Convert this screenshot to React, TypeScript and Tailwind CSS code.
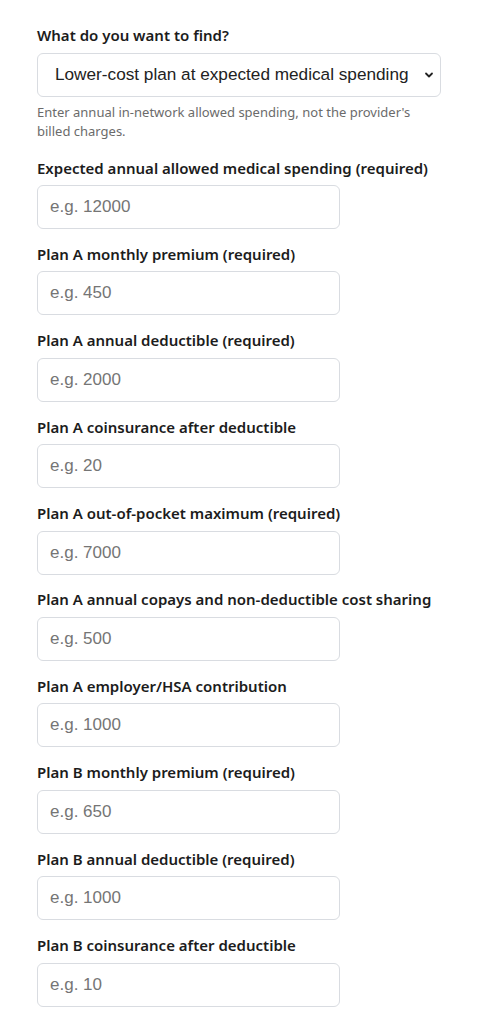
import { useState } from 'react'

const fields = [
  { label: 'Expected annual allowed medical spending (required)', ph: 'e.g. 12000' },
  { label: 'Plan A monthly premium (required)', ph: 'e.g. 450' },
  { label: 'Plan A annual deductible (required)', ph: 'e.g. 2000' },
  { label: 'Plan A coinsurance after deductible', ph: 'e.g. 20' },
  { label: 'Plan A out-of-pocket maximum (required)', ph: 'e.g. 7000' },
  { label: 'Plan A annual copays and non-deductible cost sharing', ph: 'e.g. 500' },
  { label: 'Plan A employer/HSA contribution', ph: 'e.g. 1000' },
  { label: 'Plan B monthly premium (required)', ph: 'e.g. 650' },
  { label: 'Plan B annual deductible (required)', ph: 'e.g. 1000' },
  { label: 'Plan B coinsurance after deductible', ph: 'e.g. 10' },
]

const labelCls = "block text-[15px] leading-[22.5px] font-semibold text-[#1c1c1c] font-['Noto_Sans',sans-serif] mb-1.5"
const inputCls = "block w-[303px] h-[44px] px-3 rounded-md border border-[#d9dce1] bg-white text-[17px] text-[#222] font-['Liberation_Sans',Arial,sans-serif] placeholder:text-[#757575] outline-none"

export default function App() {
  const [mode, setMode] = useState('lower')
  return (
    <div className="min-h-screen bg-white pl-[37px] pr-4 pt-6 pb-6">
      <div className="mb-4">
        <label className={labelCls}>What do you want to find?</label>
        <div className="relative w-[404px]">
          <select value={mode} onChange={e => setMode(e.target.value)}
            className="block w-full h-[44px] pl-[17px] pr-8 rounded-md border border-[#d9dce1] bg-white text-[17.2px] text-[#222] font-['Liberation_Sans',Arial,sans-serif] appearance-none outline-none">
            <option value="lower">Lower-cost plan at expected medical spending</option>
            <option value="breakeven">Break-even medical spending</option>
          </select>
          <svg className="absolute right-[7px] top-1/2 -translate-y-1/2 w-[10px] h-[10px] pointer-events-none text-[#222]" viewBox="0 0 10 10" fill="none" stroke="currentColor" strokeWidth={1.8} strokeLinecap="round" strokeLinejoin="round">
            <path d="M2 3.5l3 3 3-3" />
          </svg>
        </div>
        <p className="mt-1.5 text-[13px] leading-[19px] text-[#6b6b6b] font-['Noto_Sans',sans-serif] w-[400px]">
          Enter annual in-network allowed spending, not the provider's billed charges.
        </p>
      </div>
      <div className="flex flex-col gap-[13.9px]">
        {fields.map(f => (
          <div key={f.label}>
            <label className={labelCls}>{f.label}</label>
            <input type="number" placeholder={f.ph} className={inputCls} />
          </div>
        ))}
      </div>
    </div>
  )
}
